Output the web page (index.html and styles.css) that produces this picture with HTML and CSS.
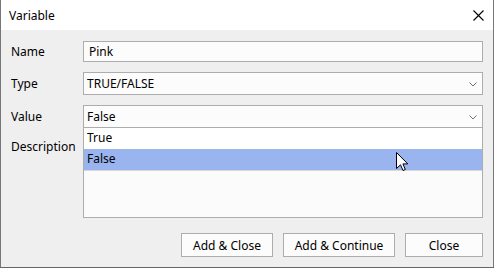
FILE: index.html
```html
<!DOCTYPE html>
<html lang="en">
<head>
 <meta charset="UTF-8">
 <title>Variable</title>
 <link rel="stylesheet" href="styles.css">
</head>
<body>
 <div class="window">
 <div class="titlebar">
 <span class="title">Variable</span>
 <svg class="close" width="11" height="11" viewBox="0 0 11 11"><path d="M0.5 0.5 L10.5 10.5 M10.5 0.5 L0.5 10.5" stroke="#000" stroke-width="1.1" fill="none"/></svg>
 </div>

 <div class="content">
 <div class="form">
 <label class="label">Name</label>
 <div class="field text">Pink</div>

 <label class="label">Type</label>
 <div class="field select">TRUE/FALSE<svg class="chevron" width="8" height="5" viewBox="0 0 8 5"><path d="M0.5 0.5 L4 4 L7.5 0.5" stroke="#707070" fill="none"/></svg></div>

 <label class="label">Value</label>
 <div class="field select value">False<svg class="chevron" width="8" height="5" viewBox="0 0 8 5"><path d="M0.5 0.5 L4 4 L7.5 0.5" stroke="#707070" fill="none"/></svg>
 <ul class="dropdown">
 <li>True</li>
 <li class="selected">False</li>
 </ul>
 </div>

 <label class="label top">Description</label>
 <div class="field area"></div>
 </div>

 <div class="buttons">
 <button class="btn w-close">Add &amp; Close</button>
 <button class="btn w-continue">Add &amp; Continue</button>
 <button class="btn w-cancel">Close</button>
 </div>
 </div>

 <svg class="cursor" width="13" height="20" viewBox="0 0 13 20"><path d="M0.5 0.5 L0.5 16.5 L4.5 12.8 L7 18.5 L9.3 17.5 L6.9 11.9 L11.8 11.9 Z" fill="#fff" stroke="#000" stroke-width="1" stroke-linejoin="miter"/></svg>
 </div>
</body>
</html>
```

FILE: styles.css
```css
body {
margin: 0;
font-family: "Segoe UI", "Noto Sans", sans-serif;
font-size: 12px;
color: #000;
background: #fff;
}
.window {
position: relative;
width: 492px;
height: 267px;
border-left: 1px solid #777;
border-right: 1px solid #777;
border-bottom: 1px solid #666;
display: flex;
flex-direction: column;
}
.titlebar {
height: 30px;
background: #fff;
display: flex;
align-items: center;
justify-content: space-between;
padding: 0 9px 0 8px;
box-sizing: border-box;
}
.title {
padding-top: 1px;
}
.close {
margin-top: 0px;
}
.content {
flex: 1;
background: #efefef;
padding: 11px 10px 0 10px;
box-sizing: border-box;
}
.form {
display: grid;
grid-template-columns: 72px 1fr;
grid-template-rows: 21px 23px 23px 80px;
row-gap: 10px;
}
.label {
display: flex;
align-items: center;
}
.label.top {
align-items: flex-start;
padding-top: 0px;
}
.field {
position: relative;
border: 1px solid #adadad;
background: #fcfcfc;
box-sizing: border-box;
display: flex;
align-items: center;
padding-left: 5px;
}
.text {
padding-left: 5px;
}
.select {
padding-left: 3px;
}
.chevron {
position: absolute;
right: 5px;
top: 9px;
}
.dropdown {
position: absolute;
left: -1px;
right: -1px;
top: 22px;
height: 90px;
margin: 0;
padding: 0;
list-style: none;
background: #fbfbfb;
border: 1px solid #adadad;
border-top: none;
box-sizing: border-box;
z-index: 2;
}
.dropdown li {
height: 21px;
line-height: 20px;
padding-left: 3px;
background: #fff;
}
.dropdown li.selected {
background: #99b4ef;
border-bottom: 1px solid #d8d8d8;
height: 22px;
box-sizing: border-box;
}
.buttons {
display: flex;
justify-content: flex-end;
gap: 10px;
margin-top: 15px;
}
.btn {
height: 24px;
font-family: inherit;
font-size: 12px;
color: #000;
background: #fcfcfc;
border: 1px solid #adadad;
padding: 0;
}
.w-close {
width: 92px;
}
.w-continue {
width: 112px;
}
.w-cancel {
width: 78px;
}
.cursor {
position: absolute;
left: 395px;
top: 152px;
z-index: 3;
}
```
